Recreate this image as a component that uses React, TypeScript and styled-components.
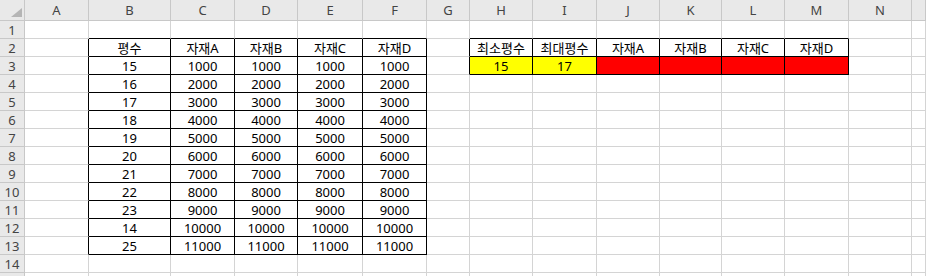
import React from "react";
import styled, { createGlobalStyle } from "styled-components";

const GlobalStyle = createGlobalStyle`
  html, body { margin: 0; padding: 0; background: #ffffff; overflow: hidden; }
  body { font-family: "Noto Sans", "Noto Sans CJK KR", sans-serif; }
`;

const COL_WIDTHS = [25, 64, 82, 64, 63, 65, 64, 43, 63, 64, 63, 62, 63, 64, 63, 14];
const COL_LETTERS = ["A", "B", "C", "D", "E", "F", "G", "H", "I", "J", "K", "L", "M", "N", ""];
const ROW_COUNT = 14;

const GRID = "#d4d4d4";
const HEAD_LINE = "#c8c8c8";
const BLACK = "#000000";

const Viewport = styled.div`
  width: 926px;
  height: 276px;
  overflow: hidden;
`;

const Sheet = styled.div`
  display: grid;
  grid-template-columns: ${COL_WIDTHS.map((w) => `${w}px`).join(" ")};
  grid-template-rows: 21px repeat(${ROW_COUNT}, 18px) 4px;
  width: 926px;
`;

const Corner = styled.div`
  background: #e9e9e9;
  border-right: 1px solid ${HEAD_LINE};
  border-bottom: 1px solid ${HEAD_LINE};
  display: flex;
  align-items: flex-end;
  justify-content: flex-end;
  padding: 0 2px 3px 0;
  box-sizing: border-box;
`;

const HeadCell = styled.div`
  background: #e9e9e9;
  border-right: 1px solid ${HEAD_LINE};
  border-bottom: 1px solid ${HEAD_LINE};
  box-sizing: border-box;
  display: flex;
  align-items: center;
  justify-content: center;
  font-size: 13px;
  line-height: 17px;
  color: #444444;
  padding-top: 1px;
  overflow: hidden;
`;

const Cell = styled.div<{ $right: string; $bottom: string; $bg: string }>`
  background: ${(p) => p.$bg};
  border-right: 1px solid ${(p) => p.$right};
  border-bottom: 1px solid ${(p) => p.$bottom};
  box-sizing: border-box;
  display: flex;
  align-items: center;
  justify-content: center;
  font-size: 13px;
  line-height: 17px;
  color: #000000;
  white-space: nowrap;
  padding-top: 1px;
`;

type CellData = { text?: string; bg?: string };

const data: Record<string, CellData> = {};
const setCell = (col: number, row: number, d: CellData) => {
  data[`${col},${row}`] = d;
};

["평수", "자재A", "자재B", "자재C", "자재D"].forEach((t, i) => setCell(1 + i, 2, { text: t }));
const pyeong = [15, 16, 17, 18, 19, 20, 21, 22, 23, 14, 25];
pyeong.forEach((p, i) => {
  const row = 3 + i;
  setCell(1, row, { text: String(p) });
  const v = String((i + 1) * 1000);
  for (let c = 2; c <= 5; c++) setCell(c, row, { text: v });
});

["최소평수", "최대평수", "자재A", "자재B", "자재C", "자재D"].forEach((t, i) =>
  setCell(7 + i, 2, { text: t })
);
setCell(7, 3, { text: "15", bg: "#ffff00" });
setCell(8, 3, { text: "17", bg: "#ffff00" });
for (let c = 9; c <= 12; c++) setCell(c, 3, { bg: "#ff0000" });

const inBordered = (col: number, row: number) =>
  (col >= 1 && col <= 5 && row >= 2 && row <= 13) ||
  (col >= 7 && col <= 12 && row >= 2 && row <= 3);

const CornerTriangle = () => (
  <svg width="11" height="9" viewBox="0 0 11 9">
    <polygon points="11,0 11,9 0,9" fill="#b5b5b5" />
  </svg>
);

export default function App() {
  const cells: React.ReactNode[] = [];
  cells.push(
    <Corner key="corner">
      <CornerTriangle />
    </Corner>
  );
  COL_LETTERS.forEach((l, i) => cells.push(<HeadCell key={`h-${i}`}>{l}</HeadCell>));

  for (let r = 1; r <= ROW_COUNT + 1; r++) {
    cells.push(<HeadCell key={`r-${r}`}>{r <= ROW_COUNT ? r : ""}</HeadCell>);
    for (let c = 0; c < COL_LETTERS.length; c++) {
      const d = data[`${c},${r}`] || {};
      const right = inBordered(c, r) || inBordered(c + 1, r) ? BLACK : GRID;
      const bottom = inBordered(c, r) || inBordered(c, r + 1) ? BLACK : GRID;
      cells.push(
        <Cell key={`${c}-${r}`} $right={right} $bottom={bottom} $bg={d.bg || "#ffffff"}>
          {d.text}
        </Cell>
      );
    }
  }

  return (
    <>
      <GlobalStyle />
      <Viewport>
        <Sheet>{cells}</Sheet>
      </Viewport>
    </>
  );
}
